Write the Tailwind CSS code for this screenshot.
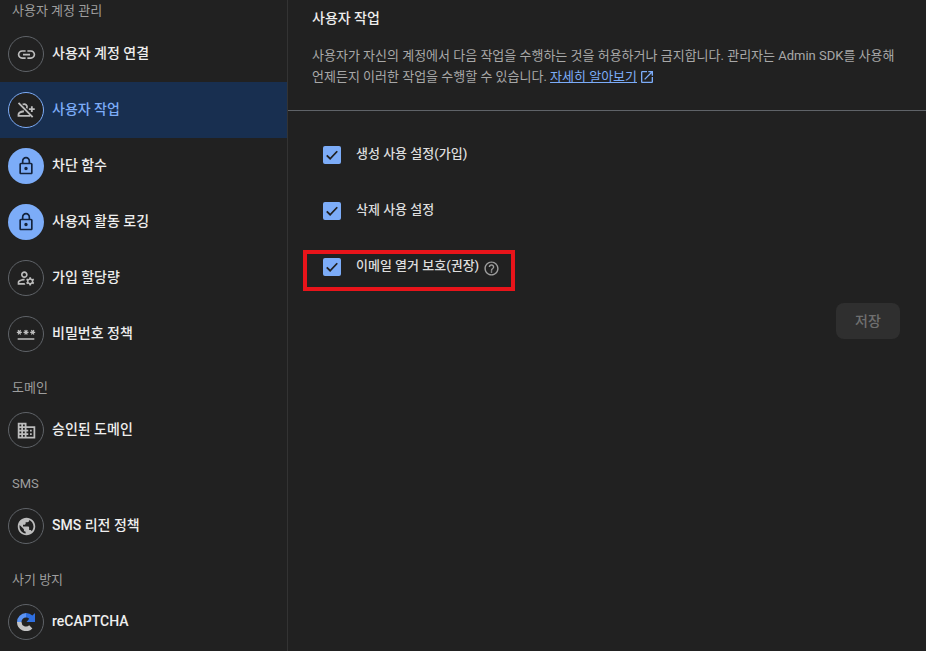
<!DOCTYPE html>
<html lang="ko">
<head>
<meta charset="utf-8">
<script src="https://cdn.jsdelivr.net/npm/@tailwindcss/browser@4"></script>
<title>사용자 작업</title>
</head>
<body class="bg-[#212121] font-['Roboto','Noto_Sans_CJK_KR',sans-serif] overflow-hidden">
<div class="flex h-[651px] w-[926px] overflow-hidden">
  <aside class="w-[288px] shrink-0 border-r border-[#333333]">
    <div class="h-[26px] pl-3 pt-px text-[13px] leading-5 text-[#9e9e9e]">사용자 계정 관리</div>
    <div class="flex h-14 items-center gap-2 pl-2 text-sm font-medium text-[#eeeeee]">
      <span class="flex size-9 items-center justify-center rounded-full border border-[#5f6368] text-[#bdbdbd]"><svg class="size-[21px]" viewBox="0 0 24 24" fill="currentColor"><path d="M3.9 12c0-1.71 1.39-3.1 3.1-3.1h4V7H7c-2.76 0-5 2.24-5 5s2.24 5 5 5h4v-1.9H7c-1.71 0-3.1-1.39-3.1-3.1zM8 13h8v-2H8v2zm9-6h-4v1.9h4c1.71 0 3.1 1.39 3.1 3.1s-1.39 3.1-3.1 3.1h-4V17h4c2.76 0 5-2.24 5-5s-2.24-5-5-5z"/></svg></span><span class="pb-0.5">사용자 계정 연결</span>
    </div>
    <div class="flex h-14 items-center gap-2 bg-[#182f50] pl-2 text-sm font-medium text-[#7cacf8]">
      <span class="flex size-9 items-center justify-center rounded-full border border-[#7cacf8] bg-[#212121] text-[#bdbdbd]"><svg class="size-[20px]" viewBox="0 0 24 24" fill="none" stroke="currentColor" stroke-width="2.2"><path d="M3 3.5 20 20.5"/><path d="M8 5.5a3.5 3.5 0 0 1 5 4.5"/><path d="M9.5 13.5C6 14 3 15.5 3 17.5V19h14"/><path d="M19 7.5v7M15.5 11h7"/></svg></span><span class="pb-0.5">사용자 작업</span>
    </div>
    <div class="flex h-14 items-center gap-2 pl-2 text-sm font-medium text-[#eeeeee]">
      <span class="flex size-9 items-center justify-center rounded-full bg-[#7cacf8] text-[#14233c]"><svg class="size-[20px]" viewBox="0 0 24 24" fill="currentColor"><path d="M18 8h-1V6c0-2.76-2.24-5-5-5S7 3.24 7 6v2H6c-1.1 0-2 .9-2 2v10c0 1.1.9 2 2 2h12c1.1 0 2-.9 2-2V10c0-1.1-.9-2-2-2zM9 6c0-1.66 1.34-3 3-3s3 1.34 3 3v2H9V6zm9 14H6V10h12v10zm-6-3c1.1 0 2-.9 2-2s-.9-2-2-2-2 .9-2 2 .9 2 2 2z"/></svg></span><span class="pb-0.5">차단 함수</span>
    </div>
    <div class="flex h-14 items-center gap-2 pl-2 text-sm font-medium text-[#eeeeee]">
      <span class="flex size-9 items-center justify-center rounded-full bg-[#7cacf8] text-[#14233c]"><svg class="size-[20px]" viewBox="0 0 24 24" fill="currentColor"><path d="M18 8h-1V6c0-2.76-2.24-5-5-5S7 3.24 7 6v2H6c-1.1 0-2 .9-2 2v10c0 1.1.9 2 2 2h12c1.1 0 2-.9 2-2V10c0-1.1-.9-2-2-2zM9 6c0-1.66 1.34-3 3-3s3 1.34 3 3v2H9V6zm9 14H6V10h12v10zm-6-3c1.1 0 2-.9 2-2s-.9-2-2-2-2 .9-2 2 .9 2 2 2z"/></svg></span><span class="pb-0.5">사용자 활동 로깅</span>
    </div>
    <div class="flex h-14 items-center gap-2 pl-2 text-sm font-medium text-[#eeeeee]">
      <span class="flex size-9 items-center justify-center rounded-full border border-[#5f6368] text-[#bdbdbd]"><svg class="size-[20px]" viewBox="0 0 24 24" fill="currentColor"><path d="M4 18v-.65c0-.34.16-.66.41-.81C6.1 15.53 8.03 15 10 15c.03 0 .05 0 .08.01.1-.7.3-1.37.59-1.98-.22-.02-.44-.03-.67-.03-2.42 0-4.68.67-6.61 1.82-.88.52-1.39 1.5-1.39 2.53V20h9.26c-.42-.6-.75-1.28-.97-2H4zm6-6c2.21 0 4-1.79 4-4s-1.79-4-4-4-4 1.79-4 4 1.79 4 4 4zm0-6c1.1 0 2 .9 2 2s-.9 2-2 2-2-.9-2-2 .9-2 2-2zm10.75 10c0-.22-.03-.42-.06-.63l1.14-1.01-1-1.73-1.45.49c-.32-.27-.68-.48-1.08-.63L18 11h-2l-.3 1.49c-.4.15-.76.36-1.08.63l-1.45-.49-1 1.73 1.14 1.01c-.03.21-.06.41-.06.63s.03.42.06.63l-1.14 1.01 1 1.73 1.45-.49c.32.27.68.48 1.08.63L16 21h2l.3-1.49c.4-.15.76-.36 1.08-.63l1.45.49 1-1.73-1.14-1.01c.03-.21.06-.41.06-.63zM17 18c-1.1 0-2-.9-2-2s.9-2 2-2 2 .9 2 2-.9 2-2 2z"/></svg></span><span class="pb-0.5">가입 할당량</span>
    </div>
    <div class="flex h-14 items-center gap-2 pl-2 text-sm font-medium text-[#eeeeee]">
      <span class="flex size-9 items-center justify-center rounded-full border border-[#5f6368] text-[#bdbdbd]"><svg class="size-[20px]" viewBox="0 0 24 24" fill="currentColor"><path d="M2 17h20v2H2v-2zm1.15-4.05L4 11.47l.85 1.48 1.3-.75-.85-1.48H7v-1.5H5.3l.85-1.47L4.85 7 4 8.47 3.15 7l-1.3.75.85 1.47H1v1.5h1.7l-.85 1.48 1.3.75zm6.7-.75l1.3.75.85-1.48.85 1.48 1.3-.75-.85-1.48H15v-1.5h-1.7l.85-1.47-1.3-.75L12 8.47 11.15 7l-1.3.75.85 1.47H9v1.5h1.7l-.85 1.48zM23 9.22h-1.7l.85-1.47-1.3-.75L20 8.47 19.15 7l-1.3.75.85 1.47H17v1.5h1.7l-.85 1.48 1.3.75.85-1.48.85 1.48 1.3-.75-.85-1.48H23v-1.5z"/></svg></span><span class="pb-0.5">비밀번호 정책</span>
    </div>
    <div class="h-10 pl-3 pt-4 text-[13px] leading-5 text-[#9e9e9e]">도메인</div>
    <div class="flex h-14 items-center gap-2 pl-2 text-sm font-medium text-[#eeeeee]">
      <span class="flex size-9 items-center justify-center rounded-full border border-[#5f6368] text-[#bdbdbd]"><svg class="size-[21px]" viewBox="0 0 24 24" fill="currentColor"><path d="M12 7V3H2v18h20V7H12zM6 19H4v-2h2v2zm0-4H4v-2h2v2zm0-4H4V9h2v2zm0-4H4V5h2v2zm4 12H8v-2h2v2zm0-4H8v-2h2v2zm0-4H8V9h2v2zm0-4H8V5h2v2zm10 12h-8v-2h2v-2h-2v-2h2v-2h-2V9h8v10zm-2-8h-2v2h2v-2zm0 4h-2v2h2v-2z"/></svg></span><span class="pb-0.5">승인된 도메인</span>
    </div>
    <div class="h-10 pl-3 pt-4 text-[13px] leading-5 text-[#9e9e9e]">SMS</div>
    <div class="flex h-14 items-center gap-2 pl-2 text-sm font-medium text-[#eeeeee]">
      <span class="flex size-9 items-center justify-center rounded-full border border-[#5f6368] text-[#bdbdbd]"><svg class="size-[21px]" viewBox="0 0 24 24" fill="currentColor"><path d="M12 2C6.48 2 2 6.48 2 12s4.48 10 10 10 10-4.48 10-10S17.52 2 12 2zm-1 17.93c-3.95-.49-7-3.85-7-7.93 0-.62.08-1.21.21-1.79L9 15v1c0 1.1.9 2 2 2v1.93zm6.9-2.54c-.26-.81-1-1.39-1.9-1.39h-1v-3c0-.55-.45-1-1-1H8v-2h2c.55 0 1-.45 1-1V7h2c1.1 0 2-.9 2-2v-.41c2.93 1.19 5 4.06 5 7.41 0 2.08-.8 3.97-2.1 5.39z"/></svg></span><span class="pb-0.5">SMS 리전 정책</span>
    </div>
    <div class="h-10 pl-3 pt-4 text-[13px] leading-5 text-[#9e9e9e]">사기 방지</div>
    <div class="flex h-14 items-center gap-2 pl-2 text-sm font-medium text-[#eeeeee]">
      <span class="flex size-9 items-center justify-center rounded-full border border-[#5f6368]"><svg class="size-[18px]" viewBox="0 0 18 18"><path fill="#c4c4c4" d="M0 9H4.5A4.5 4.5 0 0 0 12.2 12.2L15.4 15.4A9 9 0 0 1 0 9Z"/><path fill="#5b93f3" d="M0 9A9 9 0 0 1 9 0V4.5A4.5 4.5 0 0 0 4.5 9Z"/><path fill="#2f6fe0" d="M9 0A9 9 0 0 1 15.4 2.6L18 0V9H9.5L12.2 5.8A4.5 4.5 0 0 0 9 4.5Z"/></svg></span><span class="pb-0.5">reCAPTCHA</span>
    </div>
  </aside>
  <main class="relative min-w-0 flex-1">
    <div class="h-[111px] border-b border-[#5f6368] pl-6 pr-[30px] pt-2">
      <h2 class="text-sm font-medium leading-5 text-[#eeeeee]">사용자 작업</h2>
      <p class="mt-[17px] text-[13px] leading-[21px] text-[#a8a8a8]">사용자가 자신의 계정에서 다음 작업을 수행하는 것을 허용하거나 금지합니다. 관리자는 Admin SDK를 사용해 언제든지 이러한 작업을 수행할 수 있습니다. <a class="text-[#7cacf8] underline">자세히 알아보기<svg class="ml-[2px] inline-block size-[16px] align-[-4px]" viewBox="0 0 24 24" fill="currentColor"><path d="M19 19H5V5h7V3H5c-1.11 0-2 .9-2 2v14c0 1.1.89 2 2 2h14c1.1 0 2-.9 2-2v-7h-2v7zM14 3v2h3.59l-9.83 9.83 1.41 1.41L19 6.41V10h2V3h-7z"/></svg></a></p>
    </div>
    <div class="pl-[35px] pt-4">
      <label class="flex h-14 items-center gap-[15px] text-[13px] font-medium text-[#dddddd]">
        <span class="flex size-[18px] items-center justify-center rounded-[2px] bg-[#7cacf8] text-[#212121]"><svg class="size-[18px]" viewBox="0 0 24 24" fill="none" stroke="currentColor" stroke-width="2.4"><path d="M5 12.5l4.5 4.5L19 7"/></svg></span><span class="pb-0.5">생성 사용 설정(가입)</span>
      </label>
      <label class="flex h-14 items-center gap-[15px] text-[13px] font-medium text-[#dddddd]">
        <span class="flex size-[18px] items-center justify-center rounded-[2px] bg-[#7cacf8] text-[#212121]"><svg class="size-[18px]" viewBox="0 0 24 24" fill="none" stroke="currentColor" stroke-width="2.4"><path d="M5 12.5l4.5 4.5L19 7"/></svg></span><span class="pb-0.5">삭제 사용 설정</span>
      </label>
      <label class="flex h-14 items-center gap-[15px] text-[13px] font-medium text-[#dddddd]">
        <span class="flex size-[18px] items-center justify-center rounded-[2px] bg-[#7cacf8] text-[#212121]"><svg class="size-[18px]" viewBox="0 0 24 24" fill="none" stroke="currentColor" stroke-width="2.4"><path d="M5 12.5l4.5 4.5L19 7"/></svg></span><span class="flex items-center gap-[4px]"><span class="pb-0.5">이메일 열거 보호(권장)</span><svg class="mt-[2px] size-[17px] text-[#9e9e9e]" viewBox="0 0 24 24" fill="currentColor"><path d="M11 18h2v-2h-2v2zm1-16C6.48 2 2 6.48 2 12s4.48 10 10 10 10-4.48 10-10S17.52 2 12 2zm0 18c-4.41 0-8-3.59-8-8s3.59-8 8-8 8 3.59 8 8-3.59 8-8 8zm0-14c-2.21 0-4 1.79-4 4h2c0-1.1.9-2 2-2s2 .9 2 2c0 2-3 1.75-3 5h2c0-2.25 3-2.5 3-5 0-2.21-1.79-4-4-4z"/></svg></span>
      </label>
    </div>
    <div class="flex justify-end pr-[26px] pt-2">
      <button class="flex h-9 w-16 items-center justify-center rounded-lg bg-[#2f2f2f] text-sm font-medium text-[#6f6f6f]">저장</button>
    </div>
    <div class="absolute left-[15px] top-[250px] h-[41px] w-[212px] border-4 border-[#e8141a]"></div>
  </main>
</div>
</body>
</html>
